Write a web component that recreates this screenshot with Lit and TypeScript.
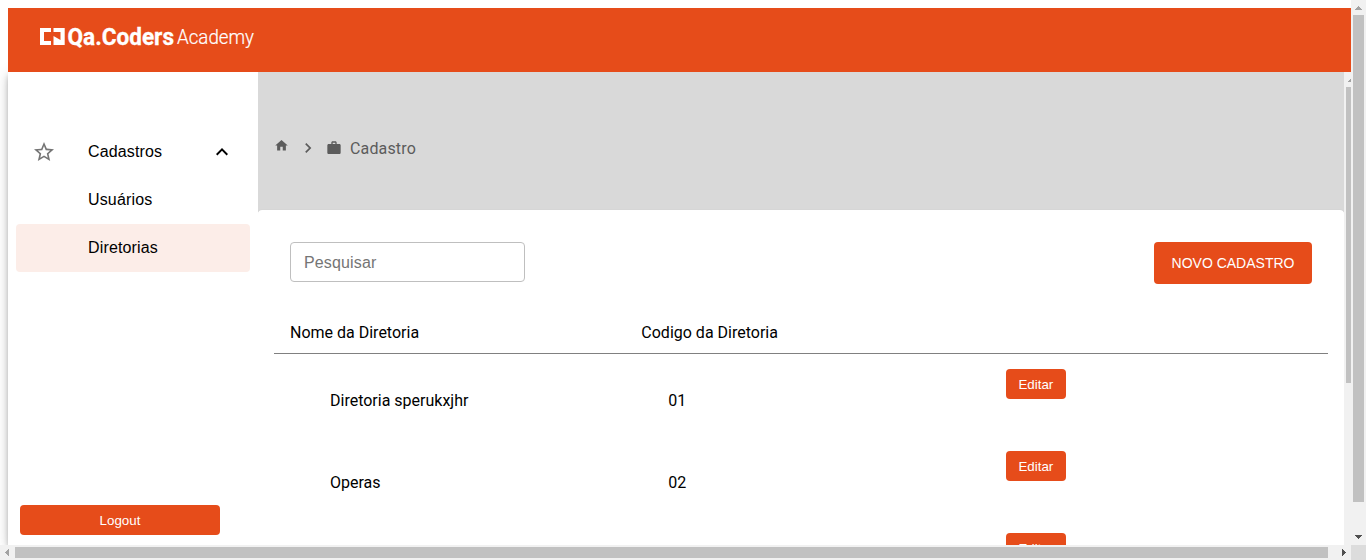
import { LitElement, html, css, svg } from "lit";
import { customElement } from "lit/decorators.js";

const icon = (d: string, cls: string) =>
  html`<svg class=${cls} viewBox="0 0 24 24" aria-hidden="true">${svg`<path d=${d}></path>`}</svg>`;

const STAR =
  "M22 9.24l-7.19-.62L12 2 9.19 8.63 2 9.24l5.46 4.73L5.82 21 12 17.27 18.18 21l-1.63-7.03L22 9.24zM12 15.4l-3.76 2.27 1-4.28-3.32-2.88 4.38-.38L12 6.1l1.71 4.04 4.38.38-3.32 2.88 1 4.28L12 15.4z";
const CHEVRON_UP = "M12 8l-6 6 1.41 1.41L12 10.83l4.59 4.58L18 14z";
const CHEVRON_RIGHT = "M10 6L8.59 7.41 13.17 12l-4.58 4.59L10 18l6-6z";
const HOME = "M10 20v-6h4v6h5v-8h3L12 3 2 12h3v8z";
const WORK =
  "M20 6h-4V4c0-1.11-.89-2-2-2h-4c-1.11 0-2 .89-2 2v2H4c-1.11 0-1.99.89-1.99 2L2 19c0 1.11.89 2 2 2h16c1.11 0 2-.89 2-2V8c0-1.11-.89-2-2-2zm-6 0h-4V4h4v2z";

@customElement("app-header")
class AppHeader extends LitElement {
  static styles = css`
    :host { display: block; height: 64px; background: #e64c1a; position: relative; z-index: 2; }
    svg { display: block; }
    .bold { font: 700 23px Roboto, sans-serif; stroke: #fff; stroke-width: 0.3px; }
    .light { font: 300 20.5px Roboto, sans-serif; stroke: #fff; stroke-width: 0.2px; }
  `;
  render() {
    return html`<svg width="260" height="64" viewBox="8 8 260 64" fill="#fff">
      <path d="M40 28h11v4h-7v9h7v4H40z" />
      <path d="M53.5 28h11.2v17H53.5v-9l7 4v-8h-7z" />
      <text class="bold" x="67.5" y="44.7" textLength="106.5" lengthAdjust="spacingAndGlyphs">Qa.Coders</text>
      <text class="light" x="177" y="44" textLength="77" lengthAdjust="spacingAndGlyphs">Academy</text>
    </svg>`;
  }
}

@customElement("app-sidebar")
class AppSidebar extends LitElement {
  static styles = css`
    :host {
      display: flex; flex-direction: column; box-sizing: border-box;
      width: 250px; flex: none; background: #fff; padding: 56px 8px 10px;
      font: 16px "Liberation Sans", Arial, sans-serif; color: #000;
      box-shadow: 0 3px 5px -1px #0003, 0 5px 8px #00000024, 0 1px 14px #0000001f;
    }
    .item {
      display: flex; align-items: center; height: 48px; box-sizing: border-box;
      padding: 0 16px; border-radius: 4px; letter-spacing: 0.15px;
    }
    .sub { padding-left: 72px; }
    .active { background: #fcede8; }
    .label { flex: 1; }
    .star { width: 24px; height: 24px; fill: #757575; margin-right: 32px; }
    .up { width: 24px; height: 24px; fill: #000; }
    .logout {
      margin: auto 0 0 4px; width: 200px; height: 30px; border: 0; border-radius: 4px;
      background: #e64c1a; color: #fff; font: 13.333px "Liberation Sans", Arial, sans-serif;
    }
  `;
  render() {
    return html`
      <div class="item">${icon(STAR, "star")}<span class="label">Cadastros</span>${icon(CHEVRON_UP, "up")}</div>
      <div class="item sub">Usuários</div>
      <div class="item sub active">Diretorias</div>
      <button class="logout">Logout</button>
    `;
  }
}

@customElement("app-content")
class AppContent extends LitElement {
  static styles = css`
    :host { display: block; flex: 1; min-width: 0; background: #fff; overflow: hidden; font: 16px/24px Roboto, sans-serif; color: #000; }
    .banner {
      height: 140px; box-sizing: border-box; background: #d9d9d9; padding: 64px 16px 0;
      display: flex; align-items: flex-start; color: #5c5c5c; fill: #5c5c5c;
    }
    .home { width: 15px; height: 15px; margin-top: 2px; }
    .right { width: 20px; height: 20px; margin: 2px 8px 0 9px; }
    .work { width: 16px; height: 16px; margin-top: 4px; margin-right: 8px; }
    .crumb { letter-spacing: 0.15px; margin-top: 1px; }
    .card { position: relative; margin-top: -2px; border-radius: 4px; background: #fff; box-shadow: 0 0 1px #0002; }
    .tools { display: flex; justify-content: space-between; align-items: flex-start; padding: 32px 32px 0; height: 68px; }
    .search {
      width: 235px; height: 40px; box-sizing: border-box; border: 1px solid #bfbfbf; border-radius: 4px;
      padding: 2px 13px 0; font: 16px "Liberation Sans", Arial, sans-serif; letter-spacing: 0.15px; background: #fff; color: #000;
    }
    .search::placeholder { color: #757575; opacity: 1; }
    .new {
      width: 158px; height: 42px; border: 0; border-radius: 4px; padding: 0; background: #e64c1a; color: #fff;
      font: 14px "Liberation Sans", Arial, sans-serif;
    }
    .table { margin: 0 16px; }
    .row { display: grid; grid-template-columns: repeat(3, 1fr); height: 82px; }
    .head { height: 44px; box-sizing: border-box; border-bottom: 1px solid #808080; padding-top: 11px; }
    .head span { padding-left: 16px; }
    .name { padding: 35px 0 0 56px; }
    .code { padding: 35px 0 0 43px; }
    .edit {
      margin: 15px 0 0 29px; width: 60px; height: 30px; padding: 0; border: 0; border-radius: 4px;
      background: #e64c1a; color: #fff; font: 13.333px "Liberation Sans", Arial, sans-serif;
      text-indent: 0.4px;
    }
  `;
  private rows = [
    ["Diretoria sperukxjhr", "01"],
    ["Operas", "02"],
    ["", ""],
  ];
  render() {
    return html`
      <div class="banner">
        ${icon(HOME, "home")}${icon(CHEVRON_RIGHT, "right")}${icon(WORK, "work")}
        <span class="crumb">Cadastro</span>
      </div>
      <div class="card">
        <div class="tools">
          <input class="search" placeholder="Pesquisar" />
          <button class="new">NOVO CADASTRO</button>
        </div>
        <div class="table">
          <div class="row head"><span>Nome da Diretoria</span><span>Codigo da Diretoria</span></div>
          ${this.rows.map(
            ([name, code]) => html`<div class="row">
              <div class="name">${name}</div>
              <div class="code">${code}</div>
              <button class="edit">Editar</button>
            </div>`
          )}
        </div>
      </div>
    `;
  }
}

@customElement("app-root")
class AppRoot extends LitElement {
  static styles = css`
    :host {
      display: grid; grid-template: 545px 15px / 1351px 15px;
      width: 1366px; height: 560px; overflow: hidden; background: #fff;
    }
    .view { display: flex; flex-direction: column; padding: 8px 0 0 8px; box-sizing: border-box; overflow: hidden; height: 545px; }
    .body { display: flex; flex: 1; min-height: 0; }
    .vbar, .hbar, .inner { background: #f1f1f1; display: flex; box-sizing: border-box; }
    .vbar, .inner { flex-direction: column; }
    .inner { width: 7px; flex: none; overflow: hidden; }
    .arrow { width: 15px; height: 15px; flex: none; display: block; }
    .off { fill: #a3a3a3; }
    .on { fill: #505050; }
    .vthumb { width: 11px; height: 487px; margin: 0 2px auto; background: #c1c1c1; }
    .hthumb { width: 1313px; height: 11px; margin: 2px auto 0 0; background: #c1c1c1; }
    .ithumb { width: 11px; height: 296px; margin-left: 2px; background: #c1c1c1; }
    .corner { background: #dcdcdc; }
  `;
  private arrow(d: string, cls: string) {
    return html`<svg class="arrow ${cls}" viewBox="0 0 15 15" shape-rendering="crispEdges"><path d=${d}></path></svg>`;
  }
  render() {
    const up = "M7 6h1v1h1v1h1v1h1v1H4V9h1V8h1V7h1z";
    const down = "M4 5h7v1h-1v1H9v1H8v1H7V8H6V7H5V6H4z";
    const left = "M9 4v7H8v-1H7V9H6V8H5V7h1V6h1V5h1V4z";
    const right = "M6 4v7h1v-1h1V9h1V8h1V7H9V6H8V5H7V4z";
    return html`
      <div class="view">
        <app-header></app-header>
        <div class="body">
          <app-sidebar></app-sidebar>
          <app-content></app-content>
          <div class="inner">${this.arrow(up, "off")}<div class="ithumb"></div></div>
        </div>
      </div>
      <div class="vbar">${this.arrow(up, "off")}<div class="vthumb"></div>${this.arrow(down, "on")}</div>
      <div class="hbar">${this.arrow(left, "off")}<div class="hthumb"></div>${this.arrow(right, "on")}</div>
      <div class="corner"></div>
    `;
  }
}
